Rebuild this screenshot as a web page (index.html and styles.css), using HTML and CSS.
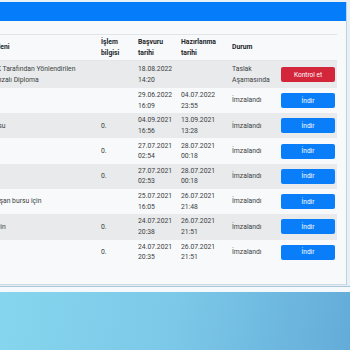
FILE: index.html
```html
<!DOCTYPE html>
<html lang="tr">
<head>
<meta charset="utf-8">
<title>Belgeler</title>
<link rel="stylesheet" href="styles.css">
</head>
<body>
<div class="page">
  <div class="upper">
    <div class="card">
      <div class="card-head"></div>
      <div class="card-body">
        <table class="docs">
          <colgroup>
            <col class="c1"><col class="c2"><col class="c3"><col class="c4"><col class="c5"><col class="c6">
          </colgroup>
          <thead>
            <tr>
              <th>Nedeni</th>
              <th>İşlem bilgisi</th>
              <th>Başvuru tarihi</th>
              <th>Hazırlanma tarihi</th>
              <th>Durum</th>
              <th></th>
            </tr>
          </thead>
          <tbody>
            <tr class="first">
              <td class="name">YÖK Tarafından Yönlendirilen E-İmzalı Diploma</td>
              <td></td>
              <td>18.08.2022<br>14:20</td>
              <td></td>
              <td>Taslak Aşamasında</td>
              <td><button class="btn red">Kontrol et</button></td>
            </tr>
            <tr>
              <td class="name"></td>
              <td></td>
              <td>29.06.2022<br>16:09</td>
              <td>04.07.2022<br>23:55</td>
              <td>İmzalandı</td>
              <td><button class="btn blue">İndir</button></td>
            </tr>
            <tr>
              <td class="name">Bursu</td>
              <td>0.</td>
              <td>04.09.2021<br>16:56</td>
              <td>13.09.2021<br>13:28</td>
              <td>İmzalandı</td>
              <td><button class="btn blue">İndir</button></td>
            </tr>
            <tr>
              <td class="name"></td>
              <td>0.</td>
              <td>27.07.2021<br>02:54</td>
              <td>28.07.2021<br>00:18</td>
              <td>İmzalandı</td>
              <td><button class="btn blue">İndir</button></td>
            </tr>
            <tr>
              <td class="name"></td>
              <td>0.</td>
              <td>27.07.2021<br>02:53</td>
              <td>28.07.2021<br>00:18</td>
              <td>İmzalandı</td>
              <td><button class="btn blue">İndir</button></td>
            </tr>
            <tr>
              <td class="name">Çalışan bursu için</td>
              <td></td>
              <td>25.07.2021<br>16:05</td>
              <td>26.07.2021<br>21:48</td>
              <td>İmzalandı</td>
              <td><button class="btn blue">İndir</button></td>
            </tr>
            <tr>
              <td class="name">İş için</td>
              <td>0.</td>
              <td>24.07.2021<br>20:38</td>
              <td>26.07.2021<br>21:51</td>
              <td>İmzalandı</td>
              <td><button class="btn blue">İndir</button></td>
            </tr>
            <tr>
              <td class="name"></td>
              <td>0.</td>
              <td>24.07.2021<br>20:35</td>
              <td>26.07.2021<br>21:51</td>
              <td>İmzalandı</td>
              <td><button class="btn blue">İndir</button></td>
            </tr>
          </tbody>
        </table>
      </div>
    </div>
    <div class="strip"></div>
  </div>
  <div class="backdrop"></div>
</div>
</body>
</html>
```

FILE: styles.css
```css
html, body {
  margin: 0;
  padding: 0;
  width: 350px;
  height: 350px;
  overflow: hidden;
}
body {
  font-family: Roboto, "Liberation Sans", sans-serif;
  color: #2b2f33;
}
.page {
  display: flex;
  flex-direction: column;
  height: 350px;
}
.upper {
  background: #eaf1f6;
  padding-top: 2px;
}
.card {
  box-sizing: border-box;
  width: 371px;
  margin-left: -24px;
  background: #f8f9fa;
  border-right: 1px solid #b9d3e3;
  border-bottom: 1px solid #cfdbe3;
}
.card-head {
  height: 19px;
  background: #057cfa;
}
.card-body {
  padding: 13px 9px 19px 10px;
}
.docs {
  width: 351px;
  table-layout: fixed;
  border-collapse: collapse;
  font-size: 6.8px;
  line-height: 10.5px;
  border-top: 1px solid #e1e4e8;
}
.c1 { width: 113px; }
.c2 { width: 37px; }
.c3 { width: 43px; }
.c4 { width: 51px; }
.c5 { width: 49px; }
.c6 { width: 58px; }
.docs th {
  text-align: left;
  font-weight: 700;
  color: #212529;
  padding: 2.2px 2px;
  vertical-align: middle;
  background: #f8f9fa;
  border-bottom: 1px solid #e3e6e9;
}
.docs td {
  padding: 2.15px 2px;
  vertical-align: middle;
  color: #3a3f44;
}
.docs td.name {
  padding-right: 22px;
}
.docs tbody tr:nth-child(odd) td {
  background: #e9eaeb;
}
.docs tbody tr:nth-child(even) td {
  background: #f8f9fa;
}
.docs tr.first {
  height: 27px;
}
.btn {
  display: block;
  box-sizing: border-box;
  width: 54px;
  height: 15px;
  border: 0;
  border-radius: 2px;
  padding: 0;
  font-family: Roboto, "Liberation Sans", sans-serif;
  font-size: 6.5px;
  color: #ffffff;
  text-align: center;
}
.red { background: #d3263a; }
.blue { background: #0a7ef8; }
.strip {
  height: 7px;
  background: #f6f9fb;
  border-top: 1px solid #e6edf2;
  box-sizing: border-box;
}
.strip::before {
  content: "";
  display: block;
  height: 1px;
  background: #a9c7dc;
}
.backdrop {
  flex: 1;
  background: linear-gradient(100deg, #86d6ee 0%, #7cc8e8 50%, #63acd9 100%);
}
```
